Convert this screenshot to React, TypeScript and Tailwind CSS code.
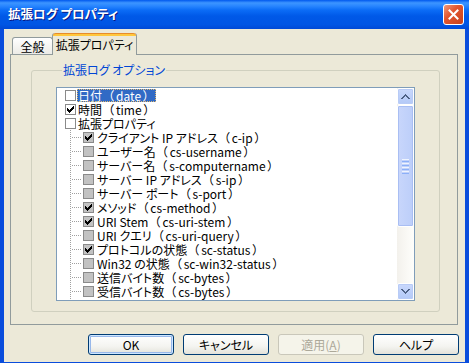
import React from 'react';

type Item = { name: string; code?: string; checked?: boolean; child?: boolean; selected?: boolean };

const items: Item[] = [
  { name: '日付', code: 'date', selected: true },
  { name: '時間', code: 'time', checked: true },
  { name: '拡張プロパティ' },
  { name: 'クライアント IP アドレス', code: 'c-ip', checked: true, child: true },
  { name: 'ユーザー名', code: 'cs-username', child: true },
  { name: 'サーバー名', code: 's-computername', child: true },
  { name: 'サーバー IP アドレス', code: 's-ip', child: true },
  { name: 'サーバー ポート', code: 's-port', child: true },
  { name: 'メソッド', code: 'cs-method', checked: true, child: true },
  { name: 'URI Stem', code: 'cs-uri-stem', checked: true, child: true },
  { name: 'URI クエリ', code: 'cs-uri-query', child: true },
  { name: 'プロトコルの状態', code: 'sc-status', checked: true, child: true },
  { name: 'Win32 の状態', code: 'sc-win32-status', child: true },
  { name: '送信バイト数', code: 'sc-bytes', child: true },
  { name: '受信バイト数', code: 'cs-bytes', child: true },
  { name: '所要時間', code: 'time-taken', child: true },
];

function Check({ checked, gray }: { checked?: boolean; gray?: boolean }) {
  return (
    <span
      className={`flex h-[11px] w-[11px] shrink-0 items-center justify-center border ${
        gray ? 'border-[#8A8A8A] bg-[#C2C2C2]' : 'border-[#8A8A8A] bg-white'
      }`}
    >
      {checked && (
        <svg width="7" height="7" viewBox="0 0 7 7" shapeRendering="crispEdges">
          <path
            fill="#000"
            d="M6 0h1v1h-1zM5 1h2v1h-2zM0 2h1v1h-1zM4 2h3v1h-3zM0 3h2v1h-2zM3 3h3v1h-3zM0 4h5v1h-5zM1 5h3v1h-3zM2 6h1v1h-1z"
          />
        </svg>
      )}
    </span>
  );
}

function Label({ item }: { item: Item }) {
  return (
    <span
      className={`ml-[1px] flex h-[13px] items-center whitespace-nowrap px-[1px] leading-[13px] ${
        item.selected ? 'bg-[#316AC5] text-white outline-1 outline-dotted outline-[#E0B870] -outline-offset-1' : 'text-black'
      }`}
    >
      <span>{item.name}</span>
      {item.code && (
        <>
          <span className="inline-block w-[12px] text-right">（</span>
          <span className="px-[2px]">{item.code}</span>
          <span className="inline-block w-[12px] text-left">）</span>
        </>
      )}
    </span>
  );
}

function Chevron({ up }: { up?: boolean }) {
  return (
    <svg width="9" height="6" viewBox="0 0 9 6" shapeRendering="crispEdges">
      <path
        fill="#4D6185"
        d={
          up
            ? 'M4 0h1v1h-1zM3 1h3v1h-3zM2 2h2v1h-2zM5 2h2v1h-2zM1 3h2v1h-2zM6 3h2v1h-2zM0 4h2v1h-2zM7 4h2v1h-2z'
            : 'M0 0h2v1h-2zM7 0h2v1h-2zM1 1h2v1h-2zM6 1h2v1h-2zM2 2h2v1h-2zM5 2h2v1h-2zM3 3h3v1h-3zM4 4h1v1h-1z'
        }
      />
    </svg>
  );
}

function XpButton({ children, primary, disabled }: { children: React.ReactNode; primary?: boolean; disabled?: boolean }) {
  return (
    <button
      className={`flex h-[21px] w-[86px] items-center justify-center rounded-[3px] border text-[12px] leading-none ${
        disabled
          ? 'border-[#C9C7BA] bg-[#F5F4EA] text-[#ACA899]'
          : 'border-[#003C74] bg-[linear-gradient(to_bottom,#FFFFFF_0%,#F4F4F0_60%,#E3E2DA_100%)] text-black'
      } ${primary ? 'shadow-[inset_0_0_0_1px_#CEE7FF,inset_0_0_0_2px_#98B8EA]' : ''}`}
    >
      {children}
    </button>
  );
}

export default function App() {
  return (
    <div className="flex h-[363px] w-[469px] flex-col overflow-hidden bg-[#0A4DDC] font-['Noto_Sans_CJK_JP',sans-serif] text-[12px] [font-feature-settings:'palt']">
      {/* Title bar */}
      <div className="flex h-[29px] shrink-0 items-center justify-between bg-[linear-gradient(to_bottom,#0058EE_0%,#3D95FF_10%,#2A87FF_20%,#0B6CF6_35%,#0059E8_55%,#0055E4_85%,#0049D6_100%)] pl-[8px] pr-[5px]">
        <span className="text-[12.5px] font-bold text-white [text-shadow:1px_1px_0_#0A1883]">拡張ログ プロパティ</span>
        <div className="flex h-[21px] w-[21px] items-center justify-center rounded-[3px] border border-white bg-[linear-gradient(135deg,#F09A7C_0%,#E2562F_40%,#C7401B_100%)]">
          <svg width="11" height="11" viewBox="0 0 11 11">
            <path d="M1.5 1.5 L9.5 9.5 M9.5 1.5 L1.5 9.5" stroke="#fff" strokeWidth="2" strokeLinecap="square" />
          </svg>
        </div>
      </div>

      {/* Body */}
      <div className="mx-[4px] flex h-[333px] flex-col bg-[#ECE9D8] pl-[6px] pt-[4px]">
        {/* Tabs */}
        <div className="relative z-10 flex h-[21px] items-end pl-[2px]">
          <div className="flex h-[17px] w-[41px] items-center justify-center rounded-t-[3px] border border-b-0 border-[#919B9C] bg-[linear-gradient(to_bottom,#FFFFFF,#ECEBE6)] pt-[1px] text-black">
            全般
          </div>
          <div className="-ml-[1px] -mb-[1px] flex h-[22px] w-[85px] flex-col rounded-t-[3px] border-x border-[#919B9C] bg-[#ECE9D8]">
            <div className="h-[3px] rounded-t-[3px] border-t border-[#E68B2C] bg-[#FFC73C]" />
            <div className="flex flex-1 items-center justify-center pb-[1px] text-black">拡張プロパティ</div>
          </div>
        </div>

        {/* Tab panel */}
        <div className="h-[271px] w-[448px] border border-[#919B9C] bg-[#ECE9D8] pl-[20px] pr-[17px] pt-[8px]">
          <fieldset className="h-[249px] rounded-[3px] border border-[#D0D0BF] px-[24px]">
            <legend className="ml-[6px] px-[1px] leading-[14px] text-[#0046D5]">拡張ログ オプション</legend>

            {/* List box */}
            <div className="mt-[10px] flex h-[214px] border border-[#7F9DB9] bg-white">
              <div className="flex-1 overflow-hidden">
                {items.map((item, i) =>
                  item.child ? (
                    <div key={i} className="flex h-[14px] items-center">
                      <svg width="26" height="14" className="shrink-0" shapeRendering="crispEdges">
                        <line x1="13.5" y1="0" x2="13.5" y2="14" stroke="#A0A0A0" strokeDasharray="1 1" />
                        <line x1="15" y1="7.5" x2="25" y2="7.5" stroke="#A0A0A0" strokeDasharray="1 1" />
                      </svg>
                      <Check checked={item.checked} gray />
                      <span className="ml-[1px]" />
                      <Label item={item} />
                    </div>
                  ) : (
                    <div key={i} className="flex h-[14px] items-center pl-[8px]">
                      <Check checked={item.checked} />
                      <Label item={item} />
                    </div>
                  )
                )}
              </div>

              {/* Scrollbar */}
              <div className="flex w-[17px] shrink-0 flex-col bg-[linear-gradient(to_right,#F3F1EC,#FEFEFB)]">
                <div className="flex h-[17px] items-center justify-center rounded-[2px] border border-[#FFFFFF] bg-[linear-gradient(to_bottom,#C9D8FC,#B3C9F7)] shadow-[inset_0_0_0_1px_#B8CBF6]">
                  <Chevron up />
                </div>
                <div className="flex h-[122px] flex-col items-center justify-center gap-[1px] rounded-[2px] border border-[#FFFFFF] bg-[linear-gradient(to_right,#C8D6FB,#BCCEF9)] shadow-[inset_0_0_0_1px_#A9BEF3]">
                  <div className="h-[1px] w-[7px] bg-[#EEF4FE]" />
                  <div className="h-[1px] w-[7px] bg-[#8CB0F8]" />
                  <div className="h-[1px] w-[7px] bg-[#EEF4FE]" />
                  <div className="h-[1px] w-[7px] bg-[#8CB0F8]" />
                  <div className="h-[1px] w-[7px] bg-[#EEF4FE]" />
                  <div className="h-[1px] w-[7px] bg-[#8CB0F8]" />
                  <div className="h-[1px] w-[7px] bg-[#EEF4FE]" />
                  <div className="h-[1px] w-[7px] bg-[#8CB0F8]" />
                </div>
                <div className="flex-1" />
                <div className="flex h-[17px] items-center justify-center rounded-[2px] border border-[#FFFFFF] bg-[linear-gradient(to_bottom,#C9D8FC,#B3C9F7)] shadow-[inset_0_0_0_1px_#B8CBF6]">
                  <Chevron />
                </div>
              </div>
            </div>
          </fieldset>
        </div>

        {/* Buttons */}
        <div className="mt-[9px] flex justify-end gap-[9px] pr-[6px]">
          <XpButton primary>OK</XpButton>
          <XpButton>キャンセル</XpButton>
          <XpButton disabled>
            適用(<span className="underline">A</span>)
          </XpButton>
          <XpButton>ヘルプ</XpButton>
        </div>
      </div>
    </div>
  );
}
